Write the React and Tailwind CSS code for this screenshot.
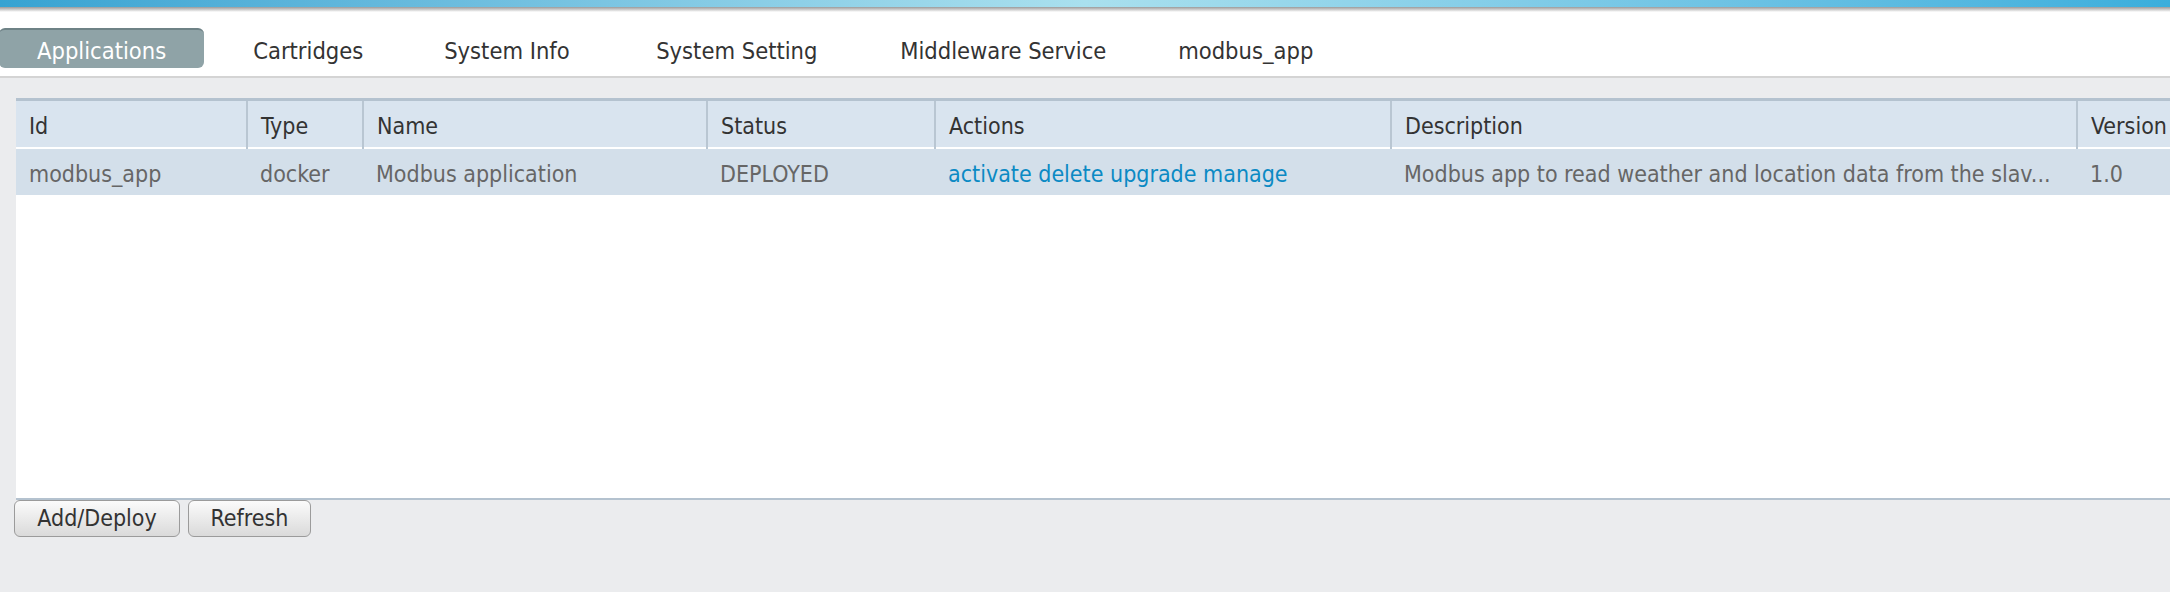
import React from "react";

const font = { fontFamily: '"DejaVu Sans Condensed", "DejaVu Sans", Tahoma, sans-serif' };

const tabs = [
  { t: "Cartridges", w: "w-[191px]" },
  { t: "System Info", w: "w-[212px]" },
  { t: "System Setting", w: "w-[244px]" },
  { t: "Middleware Service", w: "w-[278px]" },
  { t: "modbus_app", w: "w-[220px]" },
];

const cols = [
  { name: "Id", w: 231 },
  { name: "Type", w: 116 },
  { name: "Name", w: 344 },
  { name: "Status", w: 228 },
  { name: "Actions", w: 456 },
  { name: "Description", w: 686 },
  { name: "Version", w: 140 },
];

export default function App() {
  return (
    <div className="w-[2170px] h-[592px] bg-[#ebecee] overflow-hidden" style={font}>
      {/* top gradient bar */}
      <div className="h-[7px] bg-gradient-to-r from-[#36a3d2] via-[#a9e0ee] to-[#3aaedc]" />
      <div className="h-[5px] bg-gradient-to-b from-[#9a9a9a] to-[#ffffff]" />
      {/* tab bar */}
      <div className="h-[66px] bg-white border-b-2 border-[#d4d4d4] flex items-start pt-[16px]">
        <div className="h-[40px] px-[38px] pt-[5px] flex items-center rounded-[6px] bg-[#8fa3a7] border-t-2 border-[#6e8286] text-white text-[23.5px] leading-none -ml-[1px] mr-[10px]">
          Applications
        </div>
        {tabs.map((t) => (
          <div key={t.t} className={`${t.w} h-[40px] pl-[39px] pt-[8px] flex items-center text-[#333333] text-[23.5px] leading-none whitespace-nowrap`}>
            {t.t}
          </div>
        ))}
      </div>
      {/* content */}
      <div className="pt-[20px] pl-[16px]">
        <div className="h-[402px] bg-white border-t-[3px] border-b-2 border-[#b4c2cf] overflow-hidden">
          <table className="table-fixed border-collapse w-[2201px]">
            <colgroup>
              {cols.map((c) => (
                <col key={c.name} style={{ width: c.w }} />
              ))}
            </colgroup>
            <thead>
              <tr className="h-[47px] bg-[#d9e4ef] border-b-2 border-white">
                {cols.map((c, i) => (
                  <th
                    key={c.name}
                    className={`text-left font-normal text-[23px] text-[#333333] pl-[13px] pt-[4px] ${i > 0 ? "border-l-2 border-[#b9c6d2]" : ""}`}
                  >
                    {c.name}
                  </th>
                ))}
              </tr>
            </thead>
            <tbody>
              <tr className="h-[47px] bg-[#d3dfea] text-[23px] text-[#666666]">
                <td className="pl-[13px] pt-[4px]">modbus_app</td>
                <td className="pl-[13px] pt-[4px]">docker</td>
                <td className="pl-[13px] pt-[4px]">Modbus application</td>
                <td className="pl-[13px] pt-[4px]">DEPLOYED</td>
                <td className="pl-[13px] pt-[4px] text-[#0b8ac4] whitespace-nowrap">activate delete upgrade manage</td>
                <td className="pl-[13px] pt-[4px] whitespace-nowrap overflow-hidden">Modbus app to read weather and location data from the slav...</td>
                <td className="pl-[13px] pt-[4px]">1.0</td>
              </tr>
            </tbody>
          </table>
        </div>
      </div>
      {/* buttons */}
      <div className="flex gap-[8px] pl-[14px]">
        <button className="h-[37px] w-[166px] rounded-[6px] border border-[#9b9b9b] bg-gradient-to-b from-[#fbfbfb] to-[#dadada] text-[23px] text-[#333333] leading-none">
          Add/Deploy
        </button>
        <button className="h-[37px] w-[123px] rounded-[6px] border border-[#9b9b9b] bg-gradient-to-b from-[#fbfbfb] to-[#dadada] text-[23px] text-[#333333] leading-none">
          Refresh
        </button>
      </div>
    </div>
  );
}
